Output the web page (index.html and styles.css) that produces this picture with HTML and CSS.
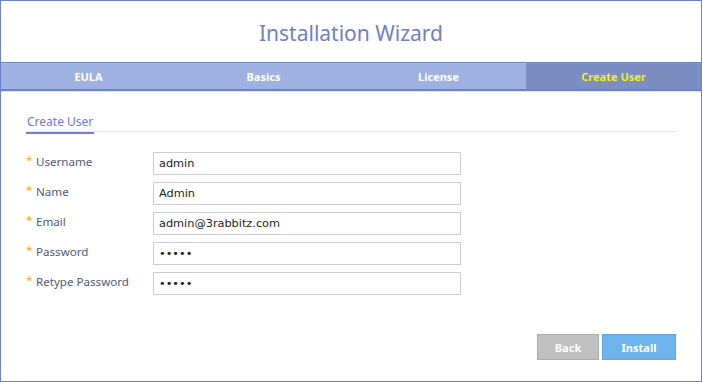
FILE: index.html
```html
<!DOCTYPE html>
<html lang="en">
<head>
    <meta charset="UTF-8">
    <title>Installation Wizard</title>
    <link rel="stylesheet" href="styles.css">
</head>
<body>
    <div class="wizard">
        <h1 class="title">Installation Wizard</h1>

        <!-- steps -->
        <ul class="steps">
            <li>EULA</li>
            <li>Basics</li>
            <li>License</li>
            <li class="active">Create User</li>
        </ul>

        <div class="content">
            <div class="section-head">
                <span>Create User</span>
            </div>

            <form class="user-form">
                <div class="form-row">
                    <label for="username"><i>*</i>Username</label>
                    <input type="text" id="username" value="admin">
                </div>
                <div class="form-row">
                    <label for="name"><i>*</i>Name</label>
                    <input type="text" id="name" value="Admin">
                </div>
                <div class="form-row">
                    <label for="email"><i>*</i>Email</label>
                    <input type="text" id="email" value="admin@3rabbitz.com">
                </div>
                <div class="form-row">
                    <label for="password"><i>*</i>Password</label>
                    <input type="password" id="password" value="admin">
                </div>
                <div class="form-row">
                    <label for="password2"><i>*</i>Retype Password</label>
                    <input type="password" id="password2" value="admin">
                </div>
            </form>

            <div class="buttons">
                <button type="button" class="btn-back">Back</button>
                <button type="button" class="btn-install">Install</button>
            </div>
        </div>
    </div>
</body>
</html>
```

FILE: styles.css
```css
/* page */
html, body {
    margin: 0;
    padding: 0;
}
body {
    font-family: "Noto Sans", "Open Sans", sans-serif;
    background: #fff;
}

.wizard {
    box-sizing: border-box;
    width: 702px;
    height: 382px;
    border: 1px solid #6a82c8;
    display: flex;
    flex-direction: column;
}

/* title */
.title {
    margin: 0;
    height: 61px;
    line-height: 64px;
    text-align: center;
    font-size: 21px;
    font-weight: normal;
    color: #6f80c4;
}

/* steps */
.steps {
    list-style: none;
    margin: 0;
    padding: 0;
    display: flex;
    height: 26px;
    background: #9eb1e0;
    border-top: 1px solid #6a82c8;
    border-bottom: 2px solid #6a82c8;
    box-shadow: 0 1px 0 #e4e4ee;
}
.steps li {
    flex: 1;
    text-align: center;
    line-height: 25px;
    font-size: 11px;
    font-weight: bold;
    color: #fff;
    border-top: 1px solid #a9bae6;
}
.steps li.active {
    background: #7b8dc1;
    border-top-color: #8394c8;
    color: #f4f01c;
}

/* content */
.content {
    flex: 1;
    padding: 18px 25px 21px 25px;
    display: flex;
    flex-direction: column;
}

.section-head {
    border-bottom: 1px solid #e2e2fa;
    height: 22px;
}
.section-head span {
    display: inline-block;
    height: 19px;
    padding: 0 1px;
    font-size: 12px;
    line-height: 18px;
    color: #6c7ad8;
    border-bottom: 2px solid #6f7ee0;
}

/* form */
.user-form {
    margin-top: 20px;
}
.form-row {
    display: flex;
    align-items: center;
    height: 22px;
    margin-bottom: 8px;
}
.form-row label {
    width: 127px;
    font-size: 11.6px;
    line-height: 20px;
    color: #505878;
    position: relative;
    top: -1px;
}
.form-row label i {
    font-style: normal;
    color: #f5a623;
    display: inline-block;
    width: 10px;
    position: relative;
    top: -2px;
}
.form-row input {
    box-sizing: border-box;
    width: 308px;
    height: 23px;
    margin: 0;
    padding: 0 5px;
    border: 1px solid #cccccc;
    font-family: "DejaVu Sans", sans-serif;
    font-size: 11.3px;
    color: #222;
    outline: none;
}

/* buttons */
.buttons {
    margin-top: auto;
    display: flex;
    justify-content: flex-end;
    gap: 3px;
}
.buttons button {
    box-sizing: border-box;
    height: 26px;
    font-family: "Noto Sans", sans-serif;
    font-size: 11px;
    font-weight: bold;
    color: #fff;
    cursor: pointer;
}
.btn-back {
    width: 62px;
    background: #c0c0c0;
    border: 1px solid #a9a9a9;
}
.btn-install {
    width: 74px;
    background: #6db4ea;
    border: 1px solid #5ea6e6;
}
```
